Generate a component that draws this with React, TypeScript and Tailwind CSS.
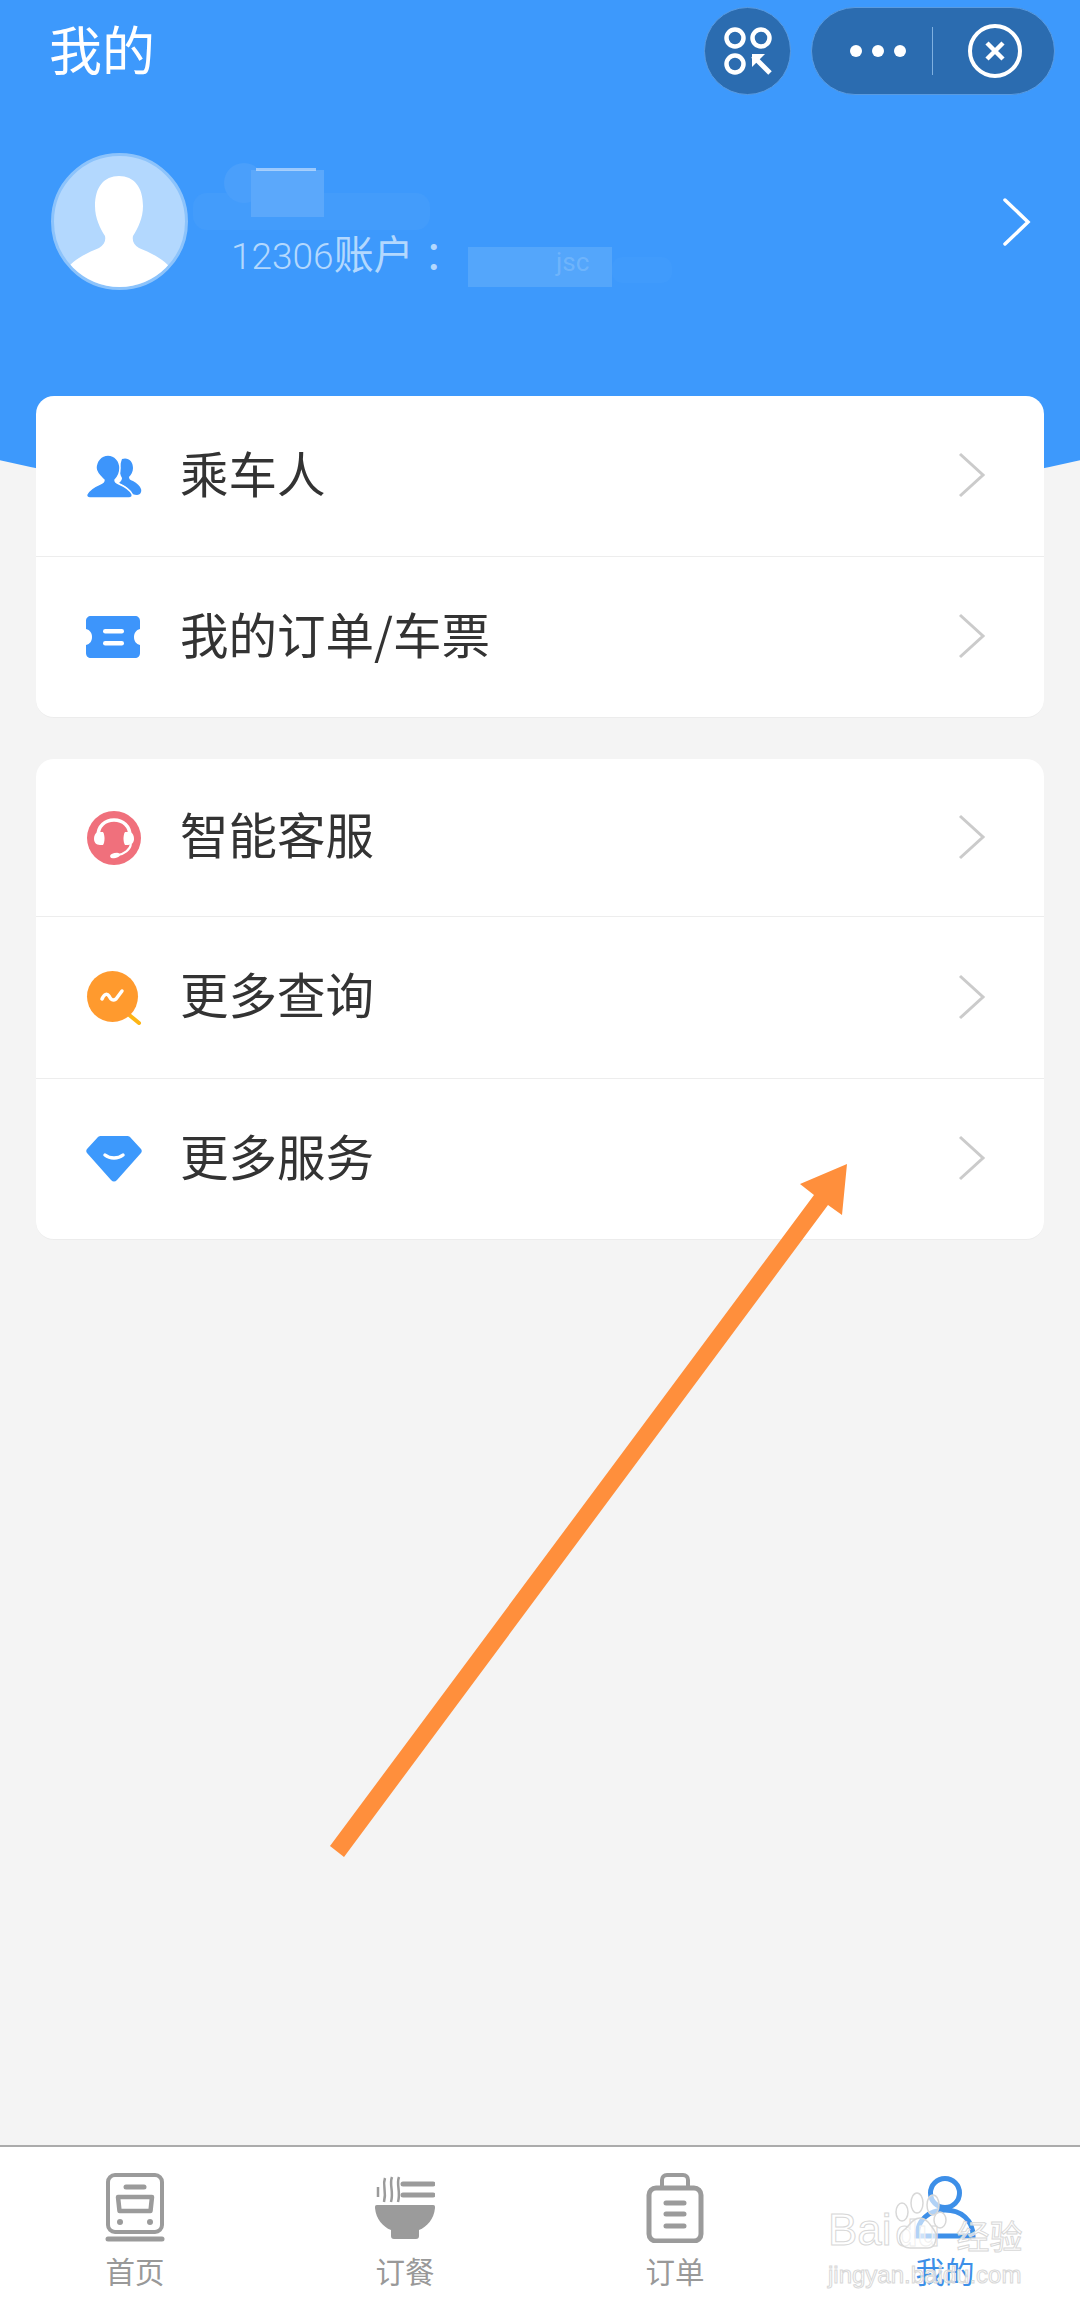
import React from "react";

const rows1 = [
  {label: "乘车人", icon: <PassengerIcon />, h: "h-[160px]"},
  {label: "我的订单/车票", icon: <TicketIcon />, h: "h-[160px]"},
];

const rows2 = [
  {label: "智能客服", icon: <ServiceIcon />, h: "h-[157px]"},
  {label: "更多查询", icon: <QueryIcon />, h: "h-[161px]"},
  {label: "更多服务", icon: <DiamondIcon />, h: "h-[160px]"},
];

function PassengerIcon() {
  return (
    <svg width="56" height="44" viewBox="0 0 56 44" fill="#3d95fb">
      {/* back person */}
      <path d="M36 5c6-2 11 2 11 9 0 4-2 7-4 9 0 2 1 3 4 4 4 2 7 5 8 8 1 3-1 6-4 6-3 0-5-1-7-3-2-4-6-7-11-9 2-2 3-3 3-5-2-3-2-6-2-9 0-4 1-7 2-10z" />
      {/* front person */}
      <path
        d="M22 1c7 0 12 6 12 13 0 5-2 9-5 12 0 2 1 3 4 4 7 3 11 6 13 10 1 3-1 4-3 4H4c-3 0-4-2-3-4 2-4 6-7 13-10 3-1 4-2 4-4-3-3-8-7-8-12 0-7 5-13 12-13z"
        stroke="#fff"
        strokeWidth="1.5"
      />
    </svg>
  );
}

function TicketIcon() {
  return (
    <svg width="54" height="42" viewBox="0 0 54 42">
      <path
        d="M5 0h44c3 0 5 2 5 5v8c-4 1-6 4-6 8s2 7 6 8v8c0 3-2 5-5 5H5c-3 0-5-2-5-5v-8c4-1 6-4 6-8s-2-7-6-8V5c0-3 2-5 5-5z"
        fill="#3d95fb"
      />
      <rect x="17" y="13" width="21" height="4.5" rx="2.2" fill="#fff" />
      <rect x="17" y="25" width="21" height="4.5" rx="2.2" fill="#fff" />
    </svg>
  );
}

function ServiceIcon() {
  return (
    <svg width="56" height="54" viewBox="0 0 56 54">
      <circle cx="28" cy="27" r="27" fill="#f0707c" />
      <path
        d="M12 25c0-10 7-16 16-16s16 6 16 16"
        fill="none"
        stroke="#fff"
        strokeWidth="3.5"
      />
      <path d="M12 21h5c2 3 2 10 0 13h-3c-4 0-6-3-6-6s1-6 4-7z" fill="#fff" />
      <path d="M39 21h5c3 1 4 4 4 7s-2 6-6 6h-3c-2-3-2-10 0-13z" fill="#fff" />
      <path
        d="M45 33c-1 6-7 10-13 11"
        fill="none"
        stroke="#fff"
        strokeWidth="2"
      />
      <ellipse cx="29" cy="44.500" rx="5" ry="2.500" fill="#fff" transform="rotate(-15 29 44.500)" />
    </svg>
  );
}

function QueryIcon() {
  return (
    <svg width="56" height="54" viewBox="0 0 56 54">
      <path d="M42 43l11 9" stroke="#fdb515" strokeWidth="4" strokeLinecap="round" />
      <circle cx="26.500" cy="25.500" r="25.500" fill="#ff9a2e" />
      <path
        d="M16 28c2-5 5-6 7-3 2 4 4 5 7 3l6-8"
        fill="none"
        stroke="#fff"
        strokeWidth="3.500"
        strokeLinecap="round"
        strokeLinejoin="round"
      />
    </svg>
  );
}

function DiamondIcon() {
  return (
    <svg width="56" height="46" viewBox="0 0 56 46">
      <path
        d="M15 0h26c1 0 2 0 3 1l11 12c1 1 1 3 0 4L31 44c-2 2-4 2-6 0L1 17c-1-1-1-3 0-4L12 1c1-1 2-1 3-1z"
        fill="#3d99fc"
      />
      <path
        d="M19 19c5 4 13 4 18 0"
        fill="none"
        stroke="#fff"
        strokeWidth="3.500"
        strokeLinecap="round"
      />
    </svg>
  );
}

const RowChevron = () => (
  <svg width="28" height="46" viewBox="0 0 28 46" className="shrink-0 -mt-[2px]">
    <path d="M2 2l23 21L2 44" fill="none" stroke="#cbcbcb" strokeWidth="3" />
  </svg>
);

const MenuCard = ({
  rows,
  className,
}: {
  rows: {label: string; icon: React.ReactNode; h: string}[];
  className: string;
}) => (
  <div
    className={`mx-[36px] relative rounded-[18px] bg-white border-b border-[#ececec] ${className}`}
  >
    {rows.map((row, i) => (
      <div
        key={row.label}
        className={`flex items-center pl-[50px] pr-[58px] ${row.h} ${
          i < rows.length - 1 ? "border-b border-[#ededed] box-content" : ""
        }`}
      >
        <div className="w-[94px] shrink-0">{row.icon}</div>
        <span className="flex-1 text-[48.500px] leading-none text-[#333] -mt-[8px]">
          {row.label}
        </span>
        <RowChevron />
      </div>
    ))}
  </div>
);

const TabItem = ({
  label,
  icon,
  active,
}: {
  label: string;
  icon: React.ReactNode;
  active?: boolean;
}) => (
  <div className="flex flex-col items-center pt-[26px]">
    <div className="h-[70px] w-full flex justify-center items-end">{icon}</div>
    <span
      className={`mt-[9px] text-[29.500px] leading-[36px] ${
        active ? "text-[#3d8fe8]" : "text-[#999]"
      }`}
    >
      {label}
    </span>
  </div>
);

const TrainIcon = () => (
  <svg width="60" height="70" viewBox="0 0 60 70" fill="none" stroke="#9b9b9b">
    <rect x="3" y="2" width="54" height="57" rx="7" strokeWidth="4" />
    <path d="M21 14h18" strokeWidth="5" strokeLinecap="round" />
    <path d="M13 24h34l-1.500 14h-31z" strokeWidth="4.500" strokeLinejoin="round" />
    <circle cx="15" cy="49" r="3" fill="#9b9b9b" stroke="none" />
    <circle cx="45" cy="49" r="3" fill="#9b9b9b" stroke="none" />
    <path d="M3 66h54" strokeWidth="5" strokeLinecap="round" />
  </svg>
);

const BowlIcon = () => (
  <svg width="60" height="64" viewBox="0 0 60 64" fill="none" stroke="#9b9b9b" className="mb-[4px]">
    <path d="M3 12v10M10 3c-3 8 2 12-1 24M17 2c-3 8 2 14-1 25M24 2c-3 8 2 14-1 25" strokeWidth="2.500" />
    <path d="M28 9h30M28 20h30" strokeWidth="5" strokeLinecap="round" />
    <path
      d="M2 30h56c2 0 2 1 2 3-1 11-8 19-16 22v6c0 2-1 3-3 3H19c-2 0-3-1-3-3v-6C8 52 1 44 0 33c0-2 0-3 2-3z"
      fill="#9b9b9b"
      stroke="none"
    />
  </svg>
);

const BagIcon = () => (
  <svg width="58" height="70" viewBox="0 0 58 70" fill="none" stroke="#9b9b9b">
    <path d="M16 14V7c0-3 2-5 5-5h16c3 0 5 2 5 5v7" strokeWidth="4" />
    <rect x="3" y="15" width="52" height="53" rx="7" strokeWidth="5" />
    <path d="M20 30h18M20 41h18M20 53h18" strokeWidth="5" strokeLinecap="round" />
  </svg>
);

const MineIcon = () => (
  <svg width="66" height="68" viewBox="0 0 66 68" fill="none" stroke="#3d8fe8" className="mb-[1px]">
    <circle cx="33" cy="19" r="14.500" strokeWidth="5" />
    <path d="M5 62c0-16 12-26 28-26s28 10 28 26z" strokeWidth="5" />
  </svg>
);

const Watermark = () => (
  <div className="absolute left-[828px] top-[2212px] w-[200px] font-['Liberation_Sans',sans-serif] text-[#ffffff]/70 [-webkit-text-stroke:1px_#d8d8d8]">
    <div className="flex items-end h-[40px] text-[44px] leading-none">
      <span>Bai</span>
      <span className="ml-[4px] font-bold text-[36px] text-white/40">du</span>
      <span className="ml-[17px] text-[33px] font-['Noto_Sans_CJK_SC',sans-serif]">经验</span>
    </div>
    <div className="mt-[8px] text-[24px] leading-[30px] whitespace-nowrap">
      jingyan.baidu.com
    </div>
    {/* paw */}
    <svg width="66" height="62" viewBox="0 0 66 62" className="absolute left-[62px] top-[-20px]" fill="#ffffff" fillOpacity="0.6" stroke="#d8d8d8" strokeWidth="1.500">
      <ellipse cx="12" cy="20" rx="6" ry="9" />
      <ellipse cx="27" cy="11" rx="6" ry="10" />
      <ellipse cx="43" cy="13" rx="6" ry="10" />
      <ellipse cx="50" cy="28" rx="6" ry="8" />
      <path d="M30 26c6 0 10 6 14 12 4 6 2 18-6 18H20C10 56 6 44 14 38c6-4 8-12 16-12z" />
    </svg>
  </div>
);

export default function App() {
  return (
    <div className="relative w-[1080px] h-[2307px] overflow-hidden flex flex-col bg-[#f4f4f4] font-['Noto_Sans_CJK_SC',sans-serif]">
      {/* curved blue background */}
      <div className="absolute left-[-324px] top-0 w-[1728px] h-[515px] bg-[#3d99fc] rounded-b-[864px_250px]" />

      {/* top bar */}
      <div className="relative h-[102px] shrink-0 flex items-center pl-[49px] pr-[25px]">
        <span className="text-[53px] leading-none text-white -mt-[6px]">我的</span>
        <div className="ml-auto flex items-center gap-[20px]">
          <div className="w-[87px] h-[88px] rounded-full bg-[#2b6cb0] border border-[#5a9be0] flex items-center justify-center">
            <svg width="48" height="48" viewBox="0 0 48 48" fill="none" stroke="#fff" strokeWidth="4.500">
              <circle cx="11" cy="11" r="8.500" />
              <circle cx="37" cy="11" r="8.500" />
              <circle cx="11" cy="37" r="8.500" />
              <path d="M29 29l17 17" strokeWidth="5" />
              <path d="M28 27h13l-13 13z" fill="#fff" stroke="none" />
            </svg>
          </div>
          <div className="w-[244px] h-[88px] rounded-full bg-[#2b6cb0] border border-[#5a9be0] flex items-center">
            <div className="w-[94px] flex items-center justify-end gap-[10px]">
              <span className="w-[12px] h-[12px] rounded-full bg-white" />
              <span className="w-[12px] h-[12px] rounded-full bg-white" />
              <span className="w-[12px] h-[12px] rounded-full bg-white" />
            </div>
            <div className="w-px h-[48px] ml-[26px] bg-[#7fb0e0]" />
            <svg width="54" height="54" viewBox="0 0 54 54" fill="none" stroke="#fff" className="ml-[35px]">
              <circle cx="27" cy="27" r="25" strokeWidth="4" />
              <path d="M19 19l16 16M35 19L19 35" strokeWidth="4.500" />
            </svg>
          </div>
        </div>
      </div>

      {/* profile */}
      <div className="relative mt-[51px] h-[137px] shrink-0 flex items-center pl-[51px] pr-[49px]">
        <div className="w-[137px] h-[137px] rounded-full overflow-hidden bg-[#b3d8fe] border-[3px] border-[#8cc3fb] shrink-0">
          <svg width="131" height="131" viewBox="0 0 131 131" fill="#fff">
            <path d="M65 20c15 0 24 11 24 30 0 12-5 22-10 30-1 5 1 9 6 12 12 5 28 12 35 25l-10 25H25l-15-25c7-13 23-20 35-25 5-3 7-7 6-12-5-8-10-18-10-30 0-19 9-30 24-30z" />
          </svg>
        </div>
        <div className="ml-[43px] self-end mb-[11px] text-[40px] leading-[44px] text-[#b3d8fe] font-['Noto_Sans_CJK_SC',sans-serif]">
          <span className="text-[37px] font-['Roboto',sans-serif] font-light">12306</span>账户<span className="ml-[10px]">：</span>
        </div>
        <svg width="28" height="48" viewBox="0 0 28 48" className="ml-auto" fill="none" stroke="#fff" strokeWidth="3.500" strokeLinecap="round">
          <path d="M2 2l23 22L2 46" />
        </svg>
        {/* privacy smudges over name and account */}
        <div className="absolute left-[193px] top-[40px] w-[237px] h-[37px] rounded-[14px] bg-[#439cfb]" />
        <div className="absolute left-[224px] top-[10px] w-[40px] h-[40px] rounded-full bg-[#4a9ffb]" />
        <div className="absolute left-[251px] top-[17px] w-[73px] h-[47px] bg-[#5ba8fb]" />
        <div className="absolute left-[256px] top-[15px] w-[60px] h-[3px] bg-[#dbeafe]/60" />
        <div className="absolute left-[468px] top-[94px] w-[144px] h-[40px] bg-[#54a6fb]" />
        <div className="absolute left-[612px] top-[104px] w-[60px] h-[26px] rounded-[10px] bg-[#409bfc]" />
        <span className="absolute left-[556px] top-[94px] text-[26px] leading-[30px] text-[#b3d8fe]/30 font-['Roboto',sans-serif]">
          jsc
        </span>
      </div>

      <MenuCard rows={rows1} className="mt-[106px]" />
      <MenuCard rows={rows2} className="mt-[41px]" />

      <div className="flex-1" />

      {/* tab bar */}
      <div className="h-[162px] shrink-0 grid grid-cols-4 bg-white border-t-2 border-[#ababab]">
        <TabItem label="首页" icon={<TrainIcon />} />
        <TabItem label="订餐" icon={<BowlIcon />} />
        <TabItem label="订单" icon={<BagIcon />} />
        <TabItem label="我的" icon={<MineIcon />} active />
      </div>

      {/* annotation arrow */}
      <svg width="1080" height="2307" viewBox="0 0 1080 2307" className="absolute inset-0 pointer-events-none">
        <polygon
          points="847,1164 800,1184 814,1195 330,1846 344,1857 828,1205 842,1215"
          fill="#ff8f3c"
        />
      </svg>

      <Watermark />
    </div>
  );
}
